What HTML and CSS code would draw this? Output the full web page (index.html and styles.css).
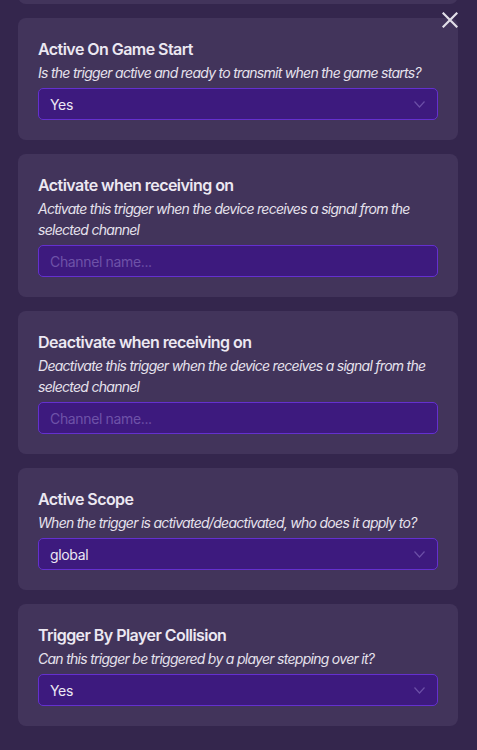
FILE: index.html
```html
<!DOCTYPE html>
<html>
<head>
<meta charset="utf-8">
<link rel="stylesheet" href="styles.css">
</head>
<body>
<div class="page">
  <div class="card card-partial"></div>

  <div class="card">
    <div class="title">Active On Game Start</div>
    <div class="desc">Is the trigger active and ready to transmit when the game starts?</div>
    <div class="field select"><span class="value">Yes</span>
      <svg class="chev" width="11" height="7" viewBox="0 0 11 7"><path d="M0.5 0.5 L5.5 6 L10.5 0.5" fill="none" stroke="#6b4fa6" stroke-width="1.2"/></svg>
    </div>
  </div>

  <div class="card">
    <div class="title">Activate when receiving on</div>
    <div class="desc">Activate this trigger when the device receives a signal from the selected channel</div>
    <div class="field"><span class="placeholder">Channel name...</span></div>
  </div>

  <div class="card">
    <div class="title">Deactivate when receiving on</div>
    <div class="desc">Deactivate this trigger when the device receives a signal from the selected channel</div>
    <div class="field"><span class="placeholder">Channel name...</span></div>
  </div>

  <div class="card">
    <div class="title">Active Scope</div>
    <div class="desc">When the trigger is activated/deactivated, who does it apply to?</div>
    <div class="field select"><span class="value">global</span>
      <svg class="chev" width="11" height="7" viewBox="0 0 11 7"><path d="M0.5 0.5 L5.5 6 L10.5 0.5" fill="none" stroke="#6b4fa6" stroke-width="1.2"/></svg>
    </div>
  </div>

  <div class="card">
    <div class="title">Trigger By Player Collision</div>
    <div class="desc">Can this trigger be triggered by a player stepping over it?</div>
    <div class="field select"><span class="value">Yes</span>
      <svg class="chev" width="11" height="7" viewBox="0 0 11 7"><path d="M0.5 0.5 L5.5 6 L10.5 0.5" fill="none" stroke="#6b4fa6" stroke-width="1.2"/></svg>
    </div>
  </div>
</div>
<svg class="close" width="16" height="16" viewBox="0 0 16 16"><path d="M1.5 1.5 L14.5 14.5 M14.5 1.5 L1.5 14.5" stroke="#e2dfe9" stroke-width="2.2" stroke-linecap="square"/></svg>
</body>
</html>
```

FILE: styles.css
```css
html, body {
  margin: 0;
  padding: 0;
}
body {
  width: 477px;
  height: 750px;
  overflow: hidden;
  background: #34264d;
  font-family: Inter, "Noto Sans", sans-serif;
  color: #e9e5ef;
  position: relative;
}
.page {
  display: flex;
  flex-direction: column;
  gap: 14px;
  padding: 0 19px 0 18px;
  margin-top: -20px;
}
.card {
  background: #42345b;
  border-radius: 8px;
  padding: 20px 20px 20px 20px;
}
.card-partial {
  height: 24px;
  padding: 0;
}
.title {
  font-size: 16px;
  font-weight: 600;
  line-height: 22px;
  letter-spacing: -0.55px;
  color: #ece8f2;
}
.desc {
  font-size: 14px;
  font-style: italic;
  line-height: 21px;
  letter-spacing: -0.72px;
  color: #e6e2ed;
  padding-top: 2px;
  margin-bottom: 5px;
}
.field {
  height: 32px;
  box-sizing: border-box;
  background: #3d1a7e;
  border: 1px solid #6430cf;
  border-radius: 5px;
  display: flex;
  align-items: center;
  justify-content: space-between;
  padding: 0 11px 0 11px;
  font-size: 14px;
  letter-spacing: -0.35px;
}
.value {
  color: #ece8f4;
}
.placeholder {
  color: #6e52a8;
}
.chev {
  display: block;
  margin-right: 1px;
}
.close {
  position: absolute;
  left: 442px;
  top: 12px;
}
```
